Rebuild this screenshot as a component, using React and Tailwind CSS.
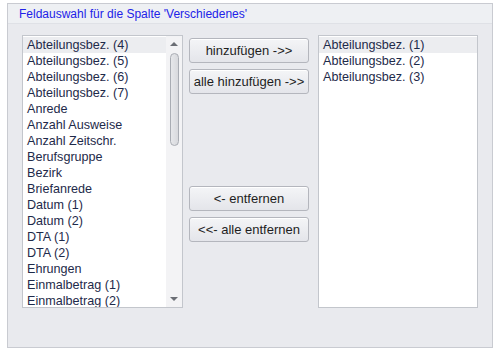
const leftItems = [
  "Abteilungsbez. (4)",
  "Abteilungsbez. (5)",
  "Abteilungsbez. (6)",
  "Abteilungsbez. (7)",
  "Anrede",
  "Anzahl Ausweise",
  "Anzahl Zeitschr.",
  "Berufsgruppe",
  "Bezirk",
  "Briefanrede",
  "Datum (1)",
  "Datum (2)",
  "DTA (1)",
  "DTA (2)",
  "Ehrungen",
  "Einmalbetrag (1)",
  "Einmalbetrag (2)",
];

const rightItems = ["Abteilungsbez. (1)", "Abteilungsbez. (2)", "Abteilungsbez. (3)"];

function Row({ label, selected }) {
  return (
    <div
      className={`h-4 pl-[4px] leading-4 whitespace-nowrap ${
        selected ? "bg-[#ecedf0]" : ""
      }`}
    >
      {label}
    </div>
  );
}

function Button({ children }) {
  return (
    <button className="h-[25px] w-[120px] whitespace-nowrap rounded-[3px] border border-[#b4b6bd] bg-gradient-to-b from-[#f4f5f7] to-[#e4e5ea] text-[13px] text-[#1e1e1e] shadow-[inset_0_1px_0_#fff]">
      {children}
    </button>
  );
}

export default function App() {
  return (
    <div className="h-[351px] w-[494px] bg-white pl-[7px] pt-[3px] font-['Liberation_Sans',Arial,sans-serif] text-[12.6px] text-[#1e2a4a]">
      <div className="flex h-[345px] w-[486px] flex-col border border-[#c9cbd1] bg-[#e9eaee]">
        <div className="flex h-[20px] items-center border-b border-[#dfe1e6] bg-[#eef0f3] pl-[11px] text-[12px] text-[#2222e8]">
          Feldauswahl für die Spalte 'Verschiedenes'
        </div>
        <div className="flex pl-[14px] pt-[11px]">
          <div className="flex h-[273px] w-[161px] border border-[#c3c6cc] bg-white">
            <div className="flex-1 overflow-hidden pt-[1px]">
              {leftItems.map((it, i) => (
                <Row key={it} label={it} selected={i === 0} />
              ))}
            </div>
            <div className="flex w-[16px] flex-col items-center bg-[#f3f3f5]">
              <div className="mt-[6px] h-0 w-0 border-x-[4px] border-b-[4px] border-x-transparent border-b-[#6b6e75]" />
              <div className="mt-[7px] h-[93px] w-[9px] rounded-full border border-[#a9acb3] bg-gradient-to-r from-[#e6e7ea] to-[#d8d9dd]" />
              <div className="flex-1" />
              <div className="mb-[6px] h-0 w-0 border-x-[4px] border-t-[4px] border-x-transparent border-t-[#6b6e75]" />
            </div>
          </div>
          <div className="ml-[6px] flex flex-col pt-[3px]">
            <Button>hinzufügen -&gt;&gt;</Button>
            <div className="h-[6px]" />
            <Button>alle hinzufügen -&gt;&gt;</Button>
            <div className="h-[92px]" />
            <Button>&lt;- entfernen</Button>
            <div className="h-[6px]" />
            <Button>&lt;&lt;- alle entfernen</Button>
          </div>
          <div className="ml-[9px] h-[273px] w-[160px] border border-[#c3c6cc] bg-white pt-[1px]">
            {rightItems.map((it, i) => (
              <Row key={it} label={it} selected={i === 0} />
            ))}
          </div>
        </div>
      </div>
    </div>
  );
}
